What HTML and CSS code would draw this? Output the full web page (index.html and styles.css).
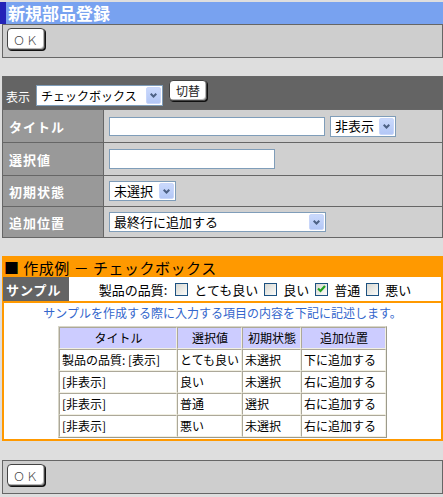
FILE: index.html
```html
<!DOCTYPE html>
<html lang="ja">
<head>
<meta charset="utf-8">
<title>新規部品登録</title>
<link rel="stylesheet" href="styles.css">
</head>
<body>
<div class="title">新規部品登録</div>
<div class="panel"><button class="btn ok">ＯＫ</button></div>

<div class="form">
  <div class="fhead">
    <span class="flabel">表示</span>
    <span class="sel sel-type"><span class="sel-text">チェックボックス</span><span class="arrow"><svg width="7" height="5" viewBox="0 0 7 5"><path d="M0.7 0.7 L3.5 3.5 L6.3 0.7" fill="none" stroke="#4d6185" stroke-width="2"/></svg></span></span>
    <button class="btn btn-sw">切替</button>
  </div>
  <div class="frow r-tall">
    <div class="lab">タイトル</div>
    <div class="val"><span class="inp inp-title"></span><span class="sel sel-vis"><span class="sel-text">非表示</span><span class="arrow"><svg width="7" height="5" viewBox="0 0 7 5"><path d="M0.7 0.7 L3.5 3.5 L6.3 0.7" fill="none" stroke="#4d6185" stroke-width="2"/></svg></span></span></div>
  </div>
  <div class="frow r-tall">
    <div class="lab">選択値</div>
    <div class="val"><span class="inp inp-value"></span></div>
  </div>
  <div class="frow r-short">
    <div class="lab">初期状態</div>
    <div class="val"><span class="sel sel-init"><span class="sel-text">未選択</span><span class="arrow"><svg width="7" height="5" viewBox="0 0 7 5"><path d="M0.7 0.7 L3.5 3.5 L6.3 0.7" fill="none" stroke="#4d6185" stroke-width="2"/></svg></span></span></div>
  </div>
  <div class="frow r-short">
    <div class="lab">追加位置</div>
    <div class="val"><span class="sel sel-pos"><span class="sel-text">最終行に追加する</span><span class="arrow"><svg width="7" height="5" viewBox="0 0 7 5"><path d="M0.7 0.7 L3.5 3.5 L6.3 0.7" fill="none" stroke="#4d6185" stroke-width="2"/></svg></span></span></div>
  </div>
</div>

<div class="example">
  <div class="ex-head">■ 作成例 － チェックボックス</div>
  <div class="sample">
    <div class="sample-lab">サンプル</div>
    <div class="sample-body">
      <span class="q">製品の品質:</span>
      <span class="opt"><span class="cb"></span>とても良い</span>
      <span class="opt"><span class="cb"></span>良い</span>
      <span class="opt"><span class="cb checked"><svg width="9" height="8" viewBox="0 0 9 8"><path d="M1 3.5 L3.5 6 L8 1" fill="none" stroke="#21a121" stroke-width="2.2"/></svg></span>普通</span>
      <span class="opt"><span class="cb"></span>悪い</span>
    </div>
  </div>
  <div class="desc">サンプルを作成する際に入力する項目の内容を下記に記述します。</div>
  <table class="spec">
    <colgroup><col class="c1"><col class="c2"><col class="c3"><col class="c4"></colgroup>
    <tr class="th"><td>タイトル</td><td>選択値</td><td>初期状態</td><td>追加位置</td></tr>
    <tr><td>製品の品質: [表示]</td><td>とても良い</td><td>未選択</td><td>下に追加する</td></tr>
    <tr><td>[非表示]</td><td>良い</td><td>未選択</td><td>右に追加する</td></tr>
    <tr><td>[非表示]</td><td>普通</td><td>選択</td><td>右に追加する</td></tr>
    <tr><td>[非表示]</td><td>悪い</td><td>未選択</td><td>右に追加する</td></tr>
  </table>
</div>

<div class="panel bottom"><button class="btn ok">ＯＫ</button></div>
</body>
</html>
```

FILE: styles.css
```css
* { box-sizing: border-box; }

body {
  margin: 0;
  padding-top: 2px;
  background: #dedede;
  font-family: "Noto Sans CJK JP", sans-serif;
  font-size: 13px;
  color: #000;
}

.title {
  height: 22px;
  background: #78a2f0;
  border-left: 6px solid #2323b8;
  padding-left: 2px;
  color: #fff;
  font-weight: bold;
  font-size: 17px;
  line-height: 22px;
}

.panel {
  margin-left: 2px;
  width: 441px;
  height: 34px;
  border: 1px solid #666;
  background: #cecece;
  padding: 3px 0 0 4px;
}
.panel.bottom { margin-top: 19px; }

.btn {
  display: inline-flex;
  align-items: center;
  justify-content: center;
  padding: 0;
  background: #fff;
  border: 1px solid #444;
  border-radius: 4px;
  box-shadow: 1px 1px 0 #111, inset -1px -1px 0 #b8b8b8;
  font-family: "Noto Sans CJK JP", sans-serif;
  color: #222;
}
.btn.ok {
  width: 38px;
  height: 22px;
  font-size: 12px;
  font-weight: 300;
  letter-spacing: 1px;
  color: #444;
}

/* form */
.form {
  margin: 18px 0 0 2px;
  width: 441px;
  border: 1px solid #666;
  background: #666;
  display: flex;
  flex-direction: column;
  gap: 1px;
}
.fhead {
  height: 32px;
  background: #646464;
  display: flex;
  align-items: flex-end;
  padding: 0 0 3px 3px;
  color: #fff;
  font-size: 12px;
}
.flabel { line-height: 14px; margin: 0 6px 2px 0; }
.btn-sw {
  width: 38px;
  height: 21px;
  margin-bottom: 5px;
  font-size: 12px;
}

.frow {
  display: grid;
  grid-template-columns: 100px 1fr;
  gap: 1px;
}
.r-tall { height: 32px; }
.r-short { height: 30px; }
.lab {
  background: #999;
  color: #fff;
  font-weight: bold;
  font-size: 13px;
  letter-spacing: 1px;
  display: flex;
  align-items: center;
  padding-left: 6px;
}
.val {
  background: #d0d0d0;
  display: flex;
  align-items: center;
  gap: 5px;
  padding-left: 5px;
}

.inp {
  display: block;
  border: 1px solid #7f9db9;
  background: #fff;
}
.inp-title { width: 216px; height: 19px; }
.inp-value { width: 166px; height: 20px; }

.sel {
  display: flex;
  align-items: stretch;
  border: 1px solid #7f9db9;
  background: #fff;
  color: #000;
  padding: 1px;
  font-size: 13px;
}
.sel-text {
  flex: 1;
  display: flex;
  align-items: center;
  padding-left: 3px;
  line-height: 16px;
  white-space: nowrap;
}
.arrow {
  width: 15px;
  display: flex;
  align-items: center;
  justify-content: center;
  background: linear-gradient(#cad9fc, #b3c7f6);
  border: 1px solid #c8d6fa;
  border-radius: 2px;
}
.sel-type { width: 127px; height: 21px; margin-right: 6px; font-size: 12px; }
.sel-vis { width: 66px; height: 21px; }
.sel-init { width: 67px; height: 20px; }
.sel-pos { width: 217px; height: 20px; }

/* example */
.example {
  margin: 18px 0 0 2px;
  width: 441px;
  border: 2px solid #f90;
  background: #fff;
  padding-bottom: 1px;
}
.ex-head {
  background: #f90;
  height: 19px;
  font-size: 15px;
  line-height: 19px;
  letter-spacing: 0.5px;
  padding-left: 0;
}
.sample {
  display: flex;
  height: 26px;
  border-bottom: 2px solid #f90;
}
.sample-lab {
  width: 66px;
  margin-left: -1px;
  background: #646464;
  color: #fff;
  font-weight: bold;
  font-size: 13px;
  letter-spacing: 1px;
  display: flex;
  align-items: center;
  padding-left: 3px;
}
.sample-body {
  flex: 1;
  display: flex;
  align-items: center;
  justify-content: center;
  font-size: 13px;
}
.q { margin-right: 2px; }
.opt { display: inline-flex; align-items: center; margin-left: 6px; }
.cb {
  width: 13px;
  height: 13px;
  border: 1px solid #1c5180;
  background: linear-gradient(135deg, #d8d8d2, #fbfbf9);
  margin-right: 6px;
  display: inline-flex;
  align-items: center;
  justify-content: center;
}

.desc {
  text-align: center;
  color: #3366cc;
  font-size: 12px;
  line-height: 16px;
  padding-top: 2px;
}

.spec {
  margin: 5px auto 0;
  width: 327px;
  table-layout: fixed;
  border-collapse: separate;
  border-spacing: 0;
  border: 1px solid;
  border-color: #d8d6c8 #9c9a8c #9c9a8c #d8d6c8;
}
.spec .c1 { width: 118px; }
.spec .c2 { width: 65px; }
.spec .c3 { width: 59px; }
.spec .c4 { width: 85px; }
.spec td {
  height: 22px;
  padding: 0 1px 0 2px;
  font-size: 12px;
  line-height: 18px;
  white-space: nowrap;
  border: 1px solid;
  border-color: #aca899 #f1efe2 #f1efe2 #aca899;
}
.spec .th td {
  background: #ccccff;
  text-align: center;
}
```
